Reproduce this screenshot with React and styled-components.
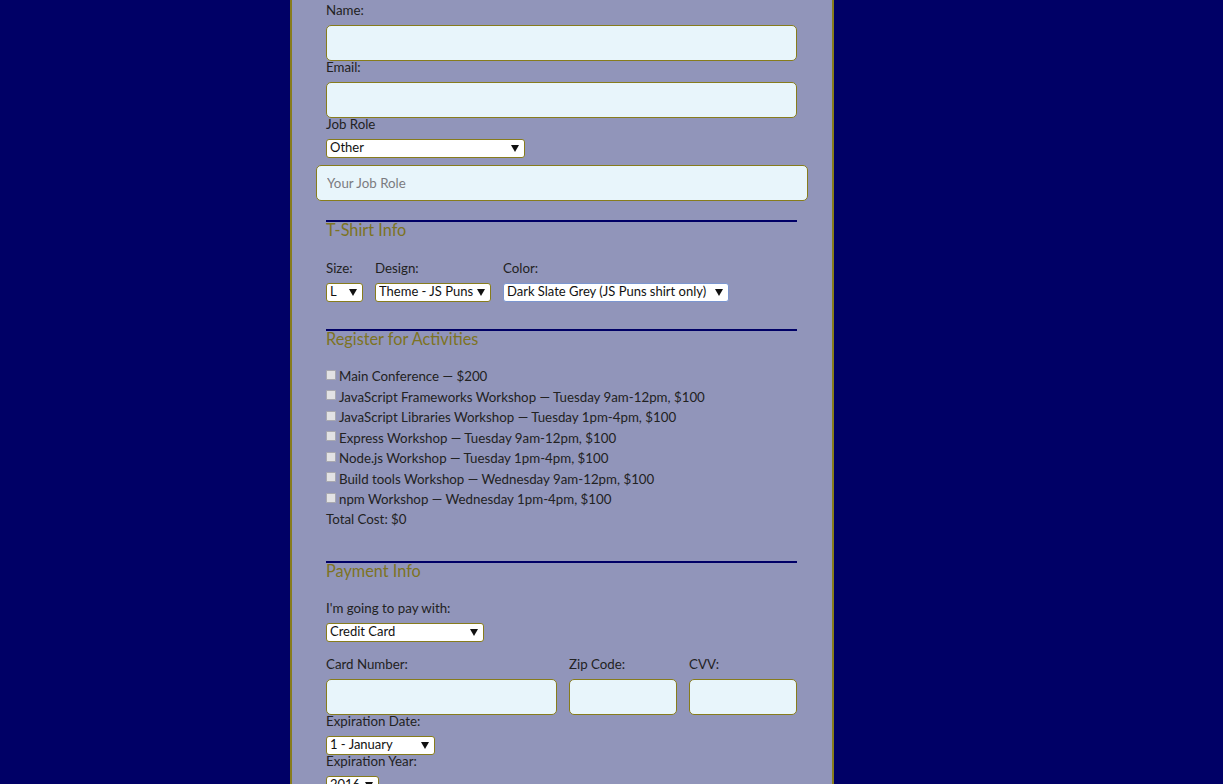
import React from 'react';
import styled, { createGlobalStyle } from 'styled-components';

const GlobalStyle = createGlobalStyle`
  html, body {
    margin: 0;
    padding: 0;
    background: #000066;
    overflow: hidden;
  }
  body {
    font-family: Lato, "Open Sans", "Liberation Sans", sans-serif;
    font-size: 13.3px;
    color: #222;
  }
`;

const olive = '#877c1c';

const Page = styled.div`
  display: flex;
  min-height: 784px;
`;

const Panel = styled.form`
  width: 471px;
  margin-left: 290px;
  min-height: 784px;
  box-sizing: content-box;
  background: #9195ba;
  border-left: 2px solid ${olive};
  border-right: 2px solid ${olive};
  padding: 2px 35px 0 34px;
`;

const Label = styled.label`
  display: block;
  line-height: 16px;
  margin: ${p => p.$top || 0}px 0 7px;
  color: #222;
`;

const TextInput = styled.input`
  display: block;
  box-sizing: border-box;
  width: 100%;
  height: 36px;
  margin: 0;
  padding: 0 10px;
  background: #e8f5fb;
  border: 1px solid ${olive};
  border-radius: 5px;
  font: inherit;
  color: #222;
  outline: none;
  &::placeholder {
    color: #7b7b80;
  }
`;

const WideInput = styled(TextInput)`
  width: 492px;
  margin: 7px 0 0 -10px;
`;

const SelectWrap = styled.div`
  position: relative;
  display: inline-block;
  width: ${p => p.$w}px;
  height: 19px;
  vertical-align: top;
`;

const NativeSelect = styled.select`
  appearance: none;
  -webkit-appearance: none;
  box-sizing: border-box;
  width: 100%;
  height: 19px;
  margin: 0;
  padding: 0 10px 2px 3px;
  background: #fff;
  border: 1px solid ${p => (p.$focus ? '#7b96d0' : olive)};
  border-radius: 3px;
  font: inherit;
  font-size: 13px;
  line-height: 15px;
  color: #111;
  outline: none;
`;

const Arrow = styled.svg`
  position: absolute;
  right: 6px;
  top: 6px;
  pointer-events: none;
`;

function Select({ w, value, options, focus }) {
  return (
    <SelectWrap $w={w}>
      <NativeSelect defaultValue={value} $focus={focus}>
        {(options || [value]).map(o => (
          <option key={o}>{o}</option>
        ))}
      </NativeSelect>
      <Arrow width="8" height="7" viewBox="0 0 8 7">
        <path d="M0 0 H8 L4 7 Z" fill="#111" />
      </Arrow>
    </SelectWrap>
  );
}

const Section = styled.fieldset`
  border: none;
  border-top: 2px solid #000066;
  margin: ${p => p.$top}px 0 0;
  padding: 0;
  min-width: 0;
`;

const Legend = styled.div`
  font-size: 16.3px;
  line-height: 15px;
  color: #7d7322;
`;

const ShirtRow = styled.div`
  display: flex;
  gap: 12px;
  margin-top: 23px;
`;

const Field = styled.div`
  display: flex;
  flex-direction: column;
`;

const ActivityList = styled.div`
  margin-top: 20px;
`;

const Activity = styled.label`
  display: flex;
  align-items: center;
  gap: 3px;
  line-height: 20.5px;
  height: 20.5px;
`;

const Check = styled.input`
  appearance: none;
  -webkit-appearance: none;
  width: 10px;
  height: 10px;
  margin: 0 0 3px;
  box-sizing: border-box;
  background: #e2e2e4;
  border: 1px solid #a9a9b0;
  border-radius: 1px;
`;

const Total = styled.div`
  line-height: 20.5px;
  margin-top: -1px;
`;

const CardGrid = styled.div`
  display: grid;
  grid-template-columns: 231px 108px 1fr;
  column-gap: 12px;
  margin-top: 14px;
`;

const activities = [
  'Main Conference — $200',
  'JavaScript Frameworks Workshop — Tuesday 9am-12pm, $100',
  'JavaScript Libraries Workshop — Tuesday 1pm-4pm, $100',
  'Express Workshop — Tuesday 9am-12pm, $100',
  'Node.js Workshop — Tuesday 1pm-4pm, $100',
  'Build tools Workshop — Wednesday 9am-12pm, $100',
  'npm Workshop — Wednesday 1pm-4pm, $100',
];

export default function App() {
  return (
    <Page>
      <GlobalStyle />
      <Panel onSubmit={e => e.preventDefault()}>
        <Label>Name:</Label>
        <TextInput type="text" />
        <Label $top={-2}>Email:</Label>
        <TextInput type="email" />
        <Label $top={-2}>Job Role</Label>
        <Select w={199} value="Other" options={['Full Stack JavaScript Developer', 'Front End Developer', 'Back End Developer', 'Student', 'Other']} />
        <WideInput type="text" placeholder="Your Job Role" />

        <Section $top={19}>
          <Legend>T-Shirt Info</Legend>
          <ShirtRow>
            <Field>
              <Label>Size:</Label>
              <Select w={37} value="L" options={['S', 'M', 'L', 'XL']} />
            </Field>
            <Field>
              <Label>Design:</Label>
              <Select w={116} value="Theme - JS Puns" options={['Theme - JS Puns', 'Theme - I ♥ JS']} />
            </Field>
            <Field>
              <Label>Color:</Label>
              <Select w={226} value="Dark Slate Grey (JS Puns shirt only)" focus />
            </Field>
          </ShirtRow>
        </Section>

        <Section $top={27}>
          <Legend>Register for Activities</Legend>
          <ActivityList>
            {activities.map(a => (
              <Activity key={a}>
                <Check type="checkbox" />
                <span>{a}</span>
              </Activity>
            ))}
            <Total>Total Cost: $0</Total>
          </ActivityList>
        </Section>

        <Section $top={32}>
          <Legend>Payment Info</Legend>
          <Label $top={22}>I'm going to pay with:</Label>
          <Select w={158} value="Credit Card" options={['Credit Card', 'PayPal', 'Bitcoin']} />
          <CardGrid>
            <Field>
              <Label>Card Number:</Label>
              <TextInput type="text" />
            </Field>
            <Field>
              <Label>Zip Code:</Label>
              <TextInput type="text" />
            </Field>
            <Field>
              <Label>CVV:</Label>
              <TextInput type="text" />
            </Field>
          </CardGrid>
          <Label $top={-2}>Expiration Date:</Label>
          <Select w={109} value="1 - January" />
          <Label $top={-2}>Expiration Year:</Label>
          <Select w={53} value="2016" />
        </Section>
      </Panel>
    </Page>
  );
}
